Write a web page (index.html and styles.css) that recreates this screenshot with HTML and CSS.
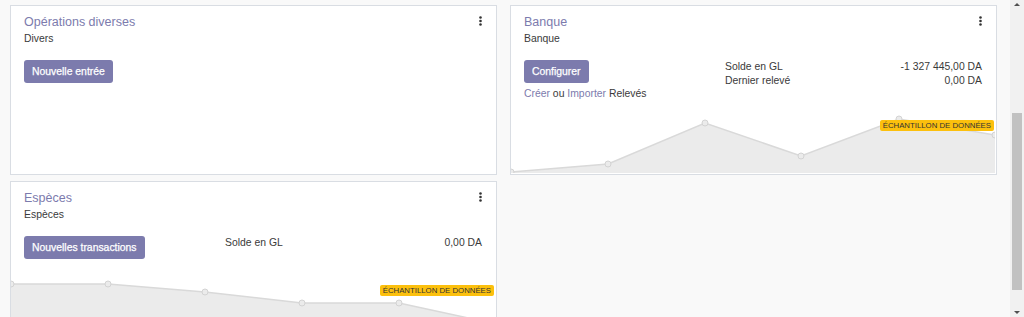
FILE: index.html
```html
<!DOCTYPE html>
<html lang="fr">
<head>
    <meta charset="UTF-8">
    <meta name="viewport" content="width=device-width, initial-scale=1.0">
    <title>Tableau de bord comptable</title>
    <link rel="stylesheet" href="styles.css">
</head>
<body>
    <div class="screen">
        <main class="dashboard">

            <!-- Opérations diverses -->
            <section class="journal-card">
                <div class="card-content">
                    <div class="card-top">
                        <div>
                            <a class="journal-title" href="#">Opérations diverses</a>
                            <div class="journal-type">Divers</div>
                        </div>
                        <span class="card-menu">
                            <svg width="3" height="10" viewBox="0 0 3 10"><circle cx="1.5" cy="1.5" r="1.3"/><circle cx="1.5" cy="5" r="1.3"/><circle cx="1.5" cy="8.5" r="1.3"/></svg>
                        </span>
                    </div>
                    <div class="card-body">
                        <div class="col-left">
                            <button class="btn-primary">Nouvelle entrée</button>
                        </div>
                    </div>
                </div>
            </section>

            <!-- Banque -->
            <section class="journal-card">
                <div class="card-content">
                    <div class="card-top">
                        <div>
                            <a class="journal-title" href="#">Banque</a>
                            <div class="journal-type">Banque</div>
                        </div>
                        <span class="card-menu">
                            <svg width="3" height="10" viewBox="0 0 3 10"><circle cx="1.5" cy="1.5" r="1.3"/><circle cx="1.5" cy="5" r="1.3"/><circle cx="1.5" cy="8.5" r="1.3"/></svg>
                        </span>
                    </div>
                    <div class="card-body">
                        <div class="col-left">
                            <button class="btn-primary">Configurer</button>
                            <div class="import-line"><a href="#">Créer</a> ou <a href="#">Importer</a> Relevés</div>
                        </div>
                        <div class="col-right">
                            <div class="stat-row"><span>Solde en GL</span><span>-1 327 445,00 DA</span></div>
                            <div class="stat-row"><span>Dernier relevé</span><span>0,00 DA</span></div>
                        </div>
                    </div>
                </div>
                <div class="chart chart-bank">
                    <svg width="484" height="59" viewBox="0 0 484 59">
                        <polygon class="area" points="0,58 97,50 194,9 290,42 388,5 484,21 484,59 0,59"/>
                        <polyline class="line" points="0,58 97,50 194,9 290,42 388,5 484,21"/>
                        <circle cx="0" cy="58" r="3"/><circle cx="97" cy="50" r="3"/><circle cx="194" cy="9" r="3"/>
                        <circle cx="290" cy="42" r="3"/><circle cx="388" cy="5" r="3"/><circle cx="484" cy="21" r="3"/>
                    </svg>
                    <span class="sample-badge">Échantillon de données</span>
                </div>
            </section>

            <!-- Espèces -->
            <section class="journal-card">
                <div class="card-content">
                    <div class="card-top">
                        <div>
                            <a class="journal-title" href="#">Espèces</a>
                            <div class="journal-type">Espèces</div>
                        </div>
                        <span class="card-menu">
                            <svg width="3" height="10" viewBox="0 0 3 10"><circle cx="1.5" cy="1.5" r="1.3"/><circle cx="1.5" cy="5" r="1.3"/><circle cx="1.5" cy="8.5" r="1.3"/></svg>
                        </span>
                    </div>
                    <div class="card-body">
                        <div class="col-left">
                            <button class="btn-primary">Nouvelles transactions</button>
                        </div>
                        <div class="col-right">
                            <div class="stat-row"><span>Solde en GL</span><span>0,00 DA</span></div>
                        </div>
                    </div>
                </div>
                <div class="chart chart-cash">
                    <svg width="485" height="60" viewBox="0 0 485 60">
                        <polygon class="area" points="0,5 97,5 194,13 291,24 388,24 485,45 485,60 0,60"/>
                        <polyline class="line" points="0,5 97,5 194,13 291,24 388,24 485,45"/>
                        <circle cx="0" cy="5" r="3"/><circle cx="97" cy="5" r="3"/><circle cx="194" cy="13" r="3"/>
                        <circle cx="291" cy="24" r="3"/><circle cx="388" cy="24" r="3"/>
                    </svg>
                    <span class="sample-badge">Échantillon de données</span>
                </div>
            </section>

        </main>

        <div class="scrollbar">
            <span class="arrow arrow-up"></span>
            <span class="thumb"></span>
            <span class="arrow arrow-down"></span>
        </div>
    </div>
</body>
</html>
```

FILE: styles.css
```css
html, body {
    margin: 0;
    height: 317px;
    overflow: hidden;
}
body {
    font-family: "Liberation Sans", Arial, sans-serif;
    font-size: 10.4px;
    color: #3a3a3a;
    background-color: #f9f9f9;
}
.screen {
    display: flex;
    height: 317px;
}
.dashboard {
    flex: 1;
    display: grid;
    grid-template-columns: 487px 487px;
    grid-auto-rows: 170px;
    column-gap: 13px;
    row-gap: 6px;
    padding: 5px 0 0 10px;
}
.journal-card {
    display: flex;
    flex-direction: column;
    background-color: #fff;
    border: 1px solid #d9dde3;
    overflow: hidden;
}
.card-content {
    padding: 8px 14px 0 13px;
}
.card-top {
    display: flex;
    justify-content: space-between;
}
.journal-title {
    display: block;
    font-size: 12.5px;
    line-height: 16px;
    color: #7c7bad;
    text-decoration: none;
}
.journal-type {
    margin-top: 2px;
    line-height: 14px;
}
.card-menu {
    margin-top: 2px;
    line-height: 0;
}
.card-menu svg {
    fill: #333;
}
.card-body {
    display: grid;
    grid-template-columns: 201px 1fr;
    margin-top: 14px;
}
.btn-primary {
    font-family: inherit;
    font-size: 10.4px;
    height: 23px;
    padding: 0 8px;
    color: #fff;
    background-color: #7c7bad;
    border: none;
    border-radius: 3px;
    cursor: pointer;
    -webkit-text-stroke: 0.25px #fff;
}
.import-line {
    margin-top: 4px;
    line-height: 14px;
}
.import-line a {
    color: #7c7bad;
    text-decoration: none;
}
.stat-row {
    display: flex;
    justify-content: space-between;
    line-height: 14px;
}
.chart {
    position: relative;
    line-height: 0;
}
.chart-bank {
    margin-top: 13px;
}
.chart-cash {
    margin-top: 20px;
}
.chart .area {
    fill: #ebebeb;
}
.chart .line {
    fill: none;
    stroke: #d9d9d9;
    stroke-width: 1.5;
}
.chart circle {
    fill: #ebebeb;
    stroke: #d3d3d3;
    stroke-width: 1;
}
.sample-badge {
    position: absolute;
    top: 6px;
    right: 2px;
    padding: 0 3px;
    font-size: 7.8px;
    line-height: 11px;
    text-transform: uppercase;
    color: #333;
    background-color: #fcc00d;
    border-radius: 2px;
}
.scrollbar {
    width: 14px;
    margin-left: 13px;
    display: flex;
    flex-direction: column;
    align-items: center;
    background-color: #f1f1f1;
}
.arrow {
    width: 0;
    height: 0;
    border-left: 3px solid transparent;
    border-right: 3px solid transparent;
    margin: 3px 0;
}
.arrow-up {
    border-bottom: 3px solid #505050;
}
.arrow-down {
    border-top: 3px solid #505050;
}
.thumb {
    width: 10px;
    height: 177px;
    margin: 104px 0 auto;
    background-color: #c1c1c1;
}
```
